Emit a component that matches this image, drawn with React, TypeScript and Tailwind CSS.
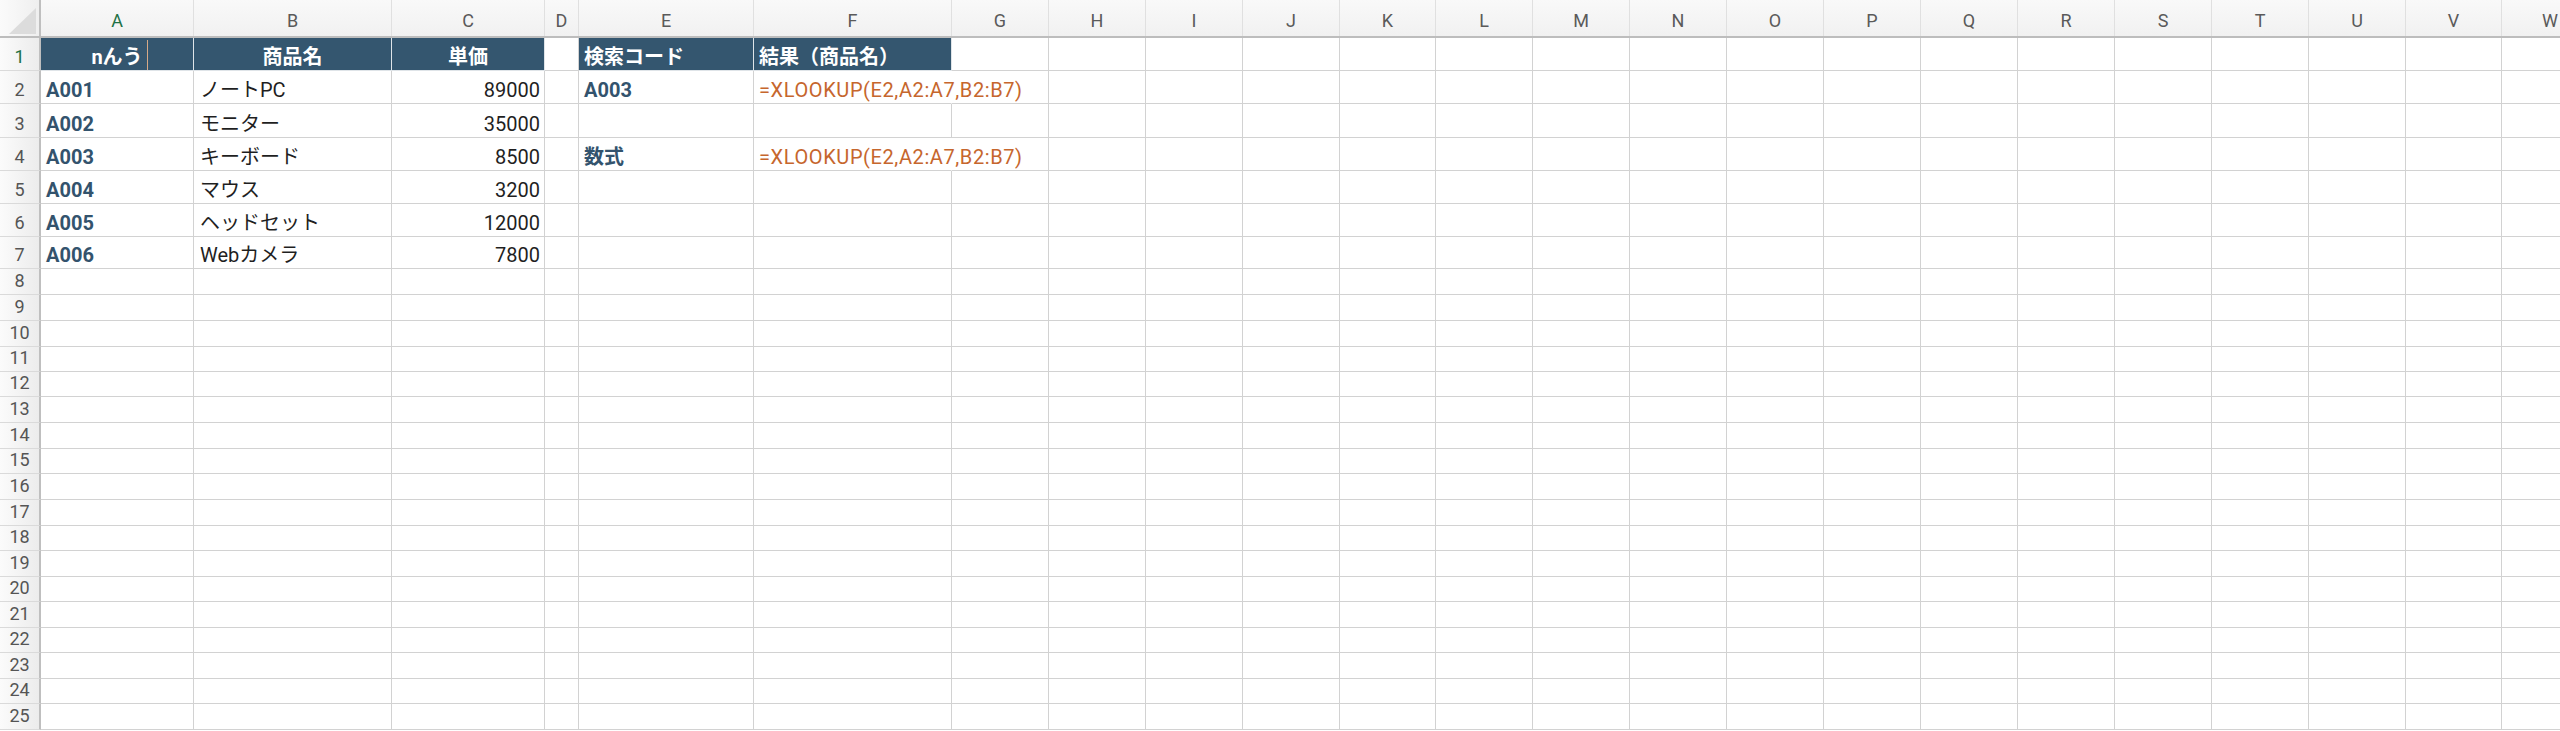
import React from 'react';

type Kind = 'head' | 'headL' | 'code' | 'jp' | 'num' | 'formula';
type Cell = { t: string; k: Kind; spill?: boolean };

const FONT = "font-['Roboto','Noto_Sans_CJK_JP',sans-serif]";

const COLS: { id: string; w: string }[] = [
  { id: 'A', w: 'w-[153px]' },
  { id: 'B', w: 'w-[198px]' },
  { id: 'C', w: 'w-[153px]' },
  { id: 'D', w: 'w-[34px]' },
  { id: 'E', w: 'w-[175px]' },
  { id: 'F', w: 'w-[198px]' },
  { id: 'G', w: 'w-[97px]' },
  { id: 'H', w: 'w-[97px]' },
  { id: 'I', w: 'w-[97px]' },
  { id: 'J', w: 'w-[97px]' },
  { id: 'K', w: 'w-[96px]' },
  { id: 'L', w: 'w-[97px]' },
  { id: 'M', w: 'w-[97px]' },
  { id: 'N', w: 'w-[97px]' },
  { id: 'O', w: 'w-[97px]' },
  { id: 'P', w: 'w-[97px]' },
  { id: 'Q', w: 'w-[97px]' },
  { id: 'R', w: 'w-[97px]' },
  { id: 'S', w: 'w-[97px]' },
  { id: 'T', w: 'w-[97px]' },
  { id: 'U', w: 'w-[97px]' },
  { id: 'V', w: 'w-[96px]' },
  { id: 'W', w: 'w-[97px]' },
];

// row heights as measured, rows 1..25
const ROWS = [
  'h-[33px]', 'h-[33px]', 'h-[34px]', 'h-[33px]', 'h-[33px]', 'h-[33px]', 'h-[32px]',
  'h-[26px]', 'h-[26px]', 'h-[26px]', 'h-[25px]', 'h-[25px]', 'h-[26px]', 'h-[26px]',
  'h-[25px]', 'h-[26px]', 'h-[26px]', 'h-[25px]', 'h-[26px]', 'h-[25px]', 'h-[26px]',
  'h-[25px]', 'h-[26px]', 'h-[25px]', 'h-[26px]',
];

const FORMULA = '=XLOOKUP(E2,A2:A7,B2:B7)';

const DATA: Record<string, Cell> = {
  A1: { t: 'nんう', k: 'head' },
  B1: { t: '商品名', k: 'head' },
  C1: { t: '単価', k: 'head' },
  E1: { t: '検索コード', k: 'headL' },
  F1: { t: '結果（商品名）', k: 'headL' },
  A2: { t: 'A001', k: 'code' }, B2: { t: 'ノートPC', k: 'jp' }, C2: { t: '89000', k: 'num' },
  A3: { t: 'A002', k: 'code' }, B3: { t: 'モニター', k: 'jp' }, C3: { t: '35000', k: 'num' },
  A4: { t: 'A003', k: 'code' }, B4: { t: 'キーボード', k: 'jp' }, C4: { t: '8500', k: 'num' },
  A5: { t: 'A004', k: 'code' }, B5: { t: 'マウス', k: 'jp' }, C5: { t: '3200', k: 'num' },
  A6: { t: 'A005', k: 'code' }, B6: { t: 'ヘッドセット', k: 'jp' }, C6: { t: '12000', k: 'num' },
  A7: { t: 'A006', k: 'code' }, B7: { t: 'Webカメラ', k: 'jp' }, C7: { t: '7800', k: 'num' },
  E2: { t: 'A003', k: 'code' },
  F2: { t: FORMULA, k: 'formula', spill: true },
  E4: { t: '数式', k: 'code' },
  F4: { t: FORMULA, k: 'formula', spill: true },
};

const KIND: Record<Kind, string> = {
  head: 'bg-[#34566f] text-white font-bold justify-center border-r-[#dfe4e8] border-b-[#dfe4e8]',
  headL: 'bg-[#34566f] text-white font-bold justify-start pl-[5px] border-r-[#dfe4e8] border-b-[#dfe4e8]',
  code: 'text-[#33536d] font-bold justify-start pl-[5px]',
  jp: 'text-[#1f1f1f] justify-start pl-[6px]',
  num: 'text-[#1f1f1f] justify-end pr-[4px]',
  formula: 'text-[#c6662d] justify-start pl-[5px] tracking-[0.6px]',
};

function Corner() {
  return (
    <div className="w-[41px] h-full shrink-0 border-r-2 border-r-[#bfbfbf] bg-linear-to-r from-[#fbfbfb] to-[#efefef]">
      <svg width="39" height="36" viewBox="0 0 39 36">
        <polygon points="9,34 36,34 36,8" fill="#dcdcdc" />
      </svg>
    </div>
  );
}

function GridCell({ id, w }: { id: string; w: string }) {
  const cell = DATA[id];
  const base = 'h-full shrink-0 flex items-end border-b border-r border-[#d2d2d2] text-[20px] leading-[24px] pb-[1px] whitespace-nowrap ' + w;
  if (!cell) return <div className={base} />;
  return (
    <div className={base + ' ' + KIND[cell.k] + (cell.spill ? ' border-r-transparent overflow-visible' : ' overflow-hidden') + (id === 'A1' ? ' relative' : '')}>
      <span className="relative z-10">{cell.t}</span>
      {id === 'A1' && <span className="absolute left-[106px] top-[2px] bottom-0 w-px bg-[#d6a987]" />}
    </div>
  );
}

export default function App() {
  return (
    <div className={'w-[2560px] h-[731px] overflow-hidden bg-white select-none ' + FONT}>
      {/* column letters */}
      <div className="flex h-[38px] border-b-2 border-b-[#bdbdbd] bg-linear-to-b from-[#f9f9f9] to-[#f1f1f1]">
        <Corner />
        {COLS.map(c => (
          <div
            key={c.id}
            className={'h-full shrink-0 flex items-center justify-center pt-[4px] border-r border-r-[#e0e0e0] text-[18px] ' + c.w + (c.id === 'A' ? ' text-[#1e7145]' : ' text-[#5a5a5a]')}
          >
            {c.id}
          </div>
        ))}
      </div>

      {ROWS.map((h, i) => {
        const r = i + 1;
        return (
          <div key={r} className={'flex ' + h}>
            <div
              className={'w-[41px] h-full shrink-0 flex items-end justify-center pb-[2px] border-r-2 border-r-[#bfbfbf] border-b border-b-[#dadada] bg-linear-to-r from-[#fbfbfb] to-[#ececec] text-[18px] leading-[22px] ' + (r === 1 ? 'text-[#1e7145]' : 'text-[#555555]')}
            >
              {r}
            </div>
            {COLS.map(c => (
              <GridCell key={c.id} id={c.id + r} w={c.w} />
            ))}
          </div>
        );
      })}
    </div>
  );
}
